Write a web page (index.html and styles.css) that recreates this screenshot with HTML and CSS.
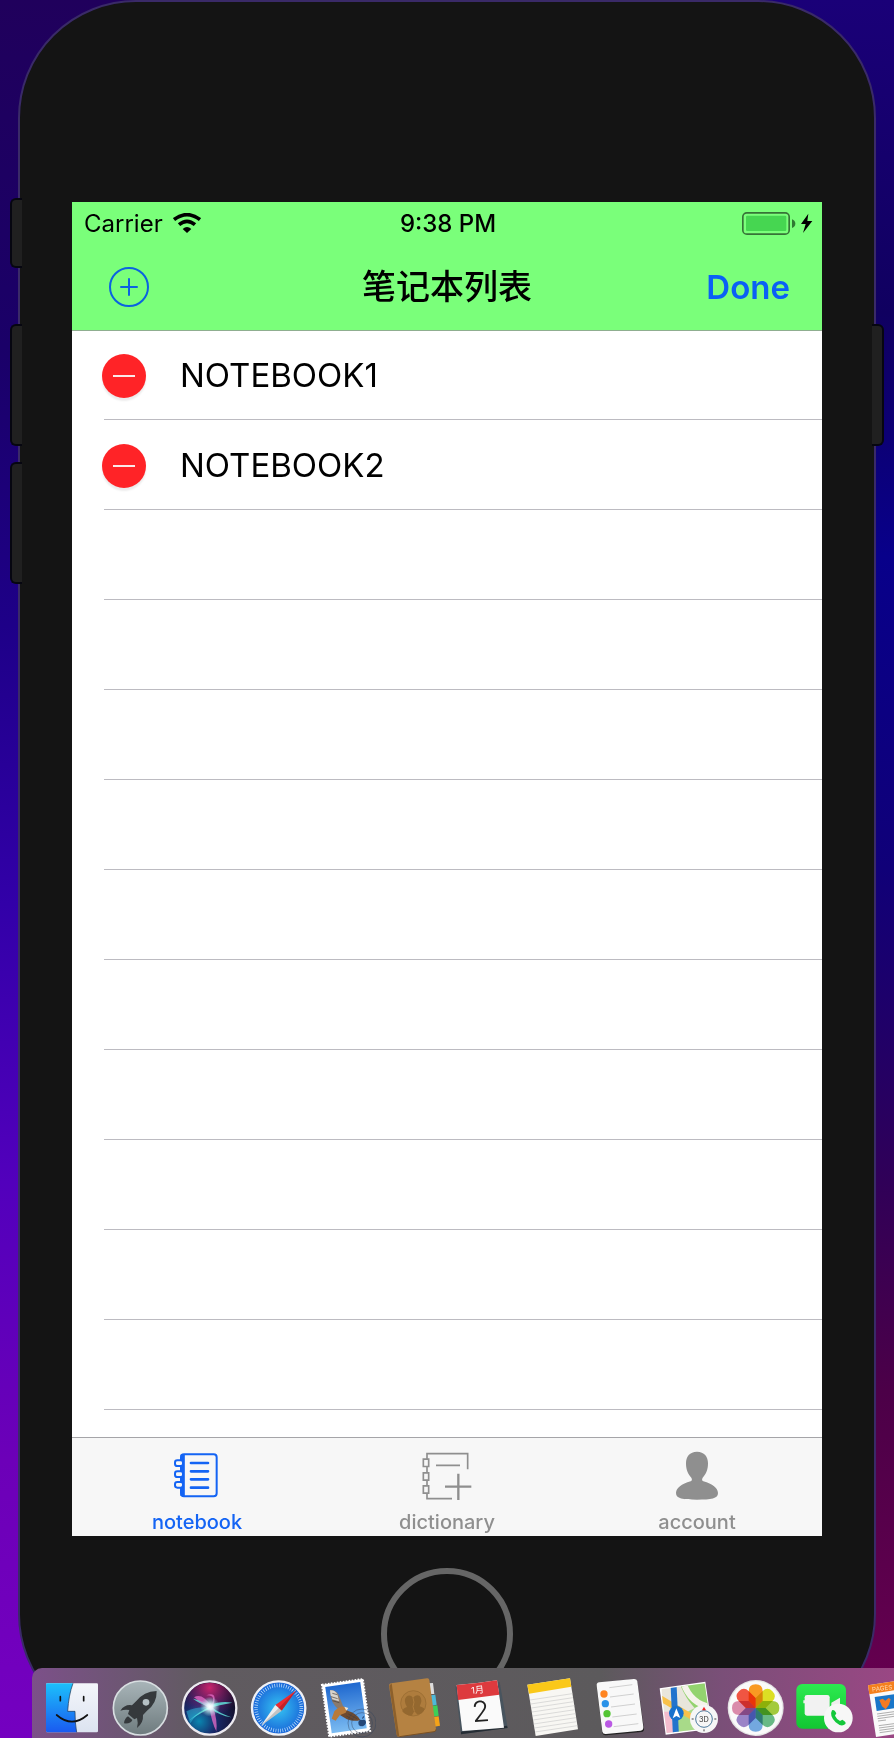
FILE: index.html
```html
<!DOCTYPE html>
<html lang="zh-CN">
<head>
<meta charset="utf-8">
<title>笔记本列表</title>
<meta name="viewport" content="width=device-width, initial-scale=1">
<link rel="stylesheet" href="styles.css">
</head>
<body>
<div class="desktop">
  <div class="phone">
    <span class="key key-mute"></span>
    <span class="key key-up"></span>
    <span class="key key-down"></span>
    <span class="key key-power"></span>

    <main class="screen">
      <header class="header">
        <div class="status">
          <div class="status-left">
            <span>Carrier</span>
            <svg class="wifi" viewBox="0 0 84 60" aria-label="Wi-Fi"><g fill="none" stroke="#000" stroke-width="11"><path d="M3 20Q42-10 81 20"/><path d="M18 35Q42 15 66 35"/></g><path d="M42 60L29 48Q42 36 55 48Z"/></svg>
          </div>
          <time class="clock">9:38 PM</time>
          <div class="status-right">
            <svg class="battery" viewBox="0 0 210 69" aria-label="Battery charging"><rect x="2.500" y="2.500" width="139" height="64" rx="12" fill="none" stroke="#000" stroke-opacity=".55" stroke-width="5"/><rect x="12" y="11" width="121" height="46" rx="4" fill="#46d651"/><path d="M150 22Q160 26 160 35T150 48Z" fill="#2f7a32"/><path d="M199 5L177 36H191L183 63L211 27H196Z"/></svg>
          </div>
        </div>
        <nav class="navbar">
          <button class="add" type="button" aria-label="Add notebook"><svg viewBox="0 0 40 40" fill="none" stroke="#0b63e0" stroke-width="2"><circle cx="20" cy="20" r="19"/><path d="M12 20H28M20 12V28" stroke-linecap="round"/></svg></button>
          <h1 class="title">笔记本列表</h1>
          <button class="done" type="button">Done</button>
        </nav>
      </header>

      <ul class="list">
        <li class="row"><button class="remove" type="button" aria-label="Delete NOTEBOOK1"></button><span>NOTEBOOK1</span></li>
        <li class="row"><button class="remove" type="button" aria-label="Delete NOTEBOOK2"></button><span>NOTEBOOK2</span></li>
        <li class="row"></li><li class="row"></li><li class="row"></li><li class="row"></li><li class="row"></li>
        <li class="row"></li><li class="row"></li><li class="row"></li><li class="row"></li><li class="row"></li>
      </ul>

      <nav class="tabs">
        <a class="tab tab-active" href="#notebook">
          <svg viewBox="-5 0 150 150" fill="none" stroke="currentColor"><rect x="22" y="13" width="107" height="126" rx="9" stroke-width="6"/><path d="M27 14V138" stroke-width="13"/><g stroke-width="6" fill="#f7f7f7"><rect x="4" y="31" width="24" height="17" rx="7"/><rect x="4" y="64" width="24" height="17" rx="7"/><rect x="4" y="96" width="24" height="17" rx="7"/></g><path d="M52 39H103M52 64H103M52 88H103M52 113H103" stroke-width="8" stroke-linecap="round"/></svg>
          <span>notebook</span>
        </a>
        <a class="tab" href="#dictionary">
          <svg viewBox="0 0 150 150" fill="none" stroke="currentColor" stroke-width="5"><path d="M137 58V11H15V27M15 50V67M15 91V108M15 130V146H90M42 46H114"/><path d="M4 27.500H20V49.500H4ZM4 68.500H20V90.500H4ZM4 107.500H20V129.500H4Z"/><path d="M69 110H148M109 71V150" stroke-width="7"/></svg>
          <span>dictionary</span>
        </a>
        <a class="tab" href="#account">
          <svg viewBox="0 0 150 150" fill="currentColor"><path d="M75 5C97 5 108 20 108 40C108 60 102 72 92 83C89 88 90 92 94 94C122 102 137 114 138 129C138 146 118 149 75 149S12 146 12 129C13 114 28 102 56 94C60 92 61 88 58 83C48 72 42 60 42 40C42 20 53 5 75 5Z"/></svg>
          <span>account</span>
        </a>
      </nav>
    </main>

    <button class="home" type="button" aria-label="Home"></button>
  </div>

  <aside class="dock" aria-label="Dock">
    <svg viewBox="126 84 180 210" role="img" aria-label="Finder">
      <defs><linearGradient id="fb" x2="0" y2="1"><stop stop-color="#1cc0fb"/><stop offset="1" stop-color="#1a5af0"/></linearGradient><linearGradient id="fw" x2="0" y2="1"><stop stop-color="#f4f6fb"/><stop offset="1" stop-color="#dce3f0"/></linearGradient></defs>
      <rect x="138" y="130" width="156" height="147" rx="4" fill="url(#fw)"/><path d="M142 130H219Q206 165 203 214H225Q225 250 230 277H142Q138 277 138 273V134Q138 130 142 130Z" fill="url(#fb)"/><path d="M219 130Q206 165 203 214H225Q225 250 230 277" fill="none" stroke="#16314f" stroke-width="2"/><g fill="none" stroke="#111" stroke-width="5" stroke-linecap="round"><path d="M181 170V182M251 170V182"/><path d="M170 225Q216 265 262 225"/></g>
    </svg>
    <svg viewBox="332 84 180 210" role="img" aria-label="Launchpad">
      <defs><linearGradient id="lp" x2="0" y2="1"><stop stop-color="#a9b5b9"/><stop offset="1" stop-color="#6e7b7e"/></linearGradient></defs>
      <circle cx="420" cy="204" r="81" fill="url(#lp)" stroke="#d8dee1" stroke-width="5"/><path d="M469 153Q430 155 408 183L395 196Q374 192 360 212Q374 207 387 210L383 222L402 238L410 234Q414 246 410 264Q430 248 428 225L440 212Q470 190 469 153ZM383 229L396 240Q392 252 371 250Q372 236 383 229Z" fill="#35393c"/><circle cx="437" cy="187" r="10" fill="#b4c0c4"/>
    </svg>
    <svg viewBox="538 84 180 210" role="img" aria-label="Siri">
      <defs><radialGradient id="sa" cx=".3" cy=".75" r=".8"><stop stop-color="#0a86b0"/><stop offset=".4" stop-color="#182a6a"/><stop offset="1" stop-color="#130a20"/></radialGradient><radialGradient id="sp" cx=".5" cy=".1" r=".6"><stop stop-color="#c8246c"/><stop offset="1" stop-color="#8a1d7a" stop-opacity="0"/></radialGradient><radialGradient id="sg"><stop stop-color="#fff"/><stop offset=".3" stop-color="#e8ffff" stop-opacity=".9"/><stop offset="1" stop-color="#8fe" stop-opacity="0"/></radialGradient></defs>
      <circle cx="630" cy="204" r="80" fill="url(#sa)" stroke="#eceaf0" stroke-width="7"/><circle cx="630" cy="204" r="76" fill="url(#sp)"/><path d="M568 242Q600 212 630 200Q600 192 580 176Q612 182 633 196Q660 182 698 188Q664 194 636 202Q660 220 695 232Q660 226 632 206Q605 216 568 242Z" fill="#5fe0d8" opacity=".85"/><path d="M583 172Q608 158 634 198Q652 164 620 166Q656 152 640 200Q654 240 650 274Q636 246 630 206Q606 190 583 172Z" fill="#e86cc8" opacity=".75"/><path d="M560 214Q590 200 622 202Q592 220 572 250Z" fill="#36c8e8" opacity=".45"/><circle cx="631" cy="200" r="30" fill="url(#sg)"/>
    </svg>
    <svg viewBox="743 84 180 210" role="img" aria-label="Safari">
      <defs><radialGradient id="sf"><stop stop-color="#35c4f2"/><stop offset="1" stop-color="#1863d8"/></radialGradient></defs>
      <circle cx="835" cy="204" r="80" fill="url(#sf)" stroke="#f0f1f5" stroke-width="7"/><circle cx="835" cy="204" r="68" fill="none" stroke="#cbe7ff" stroke-width="11" stroke-dasharray="2 5.100"/><path d="M888 151L825 195L844 212Z" fill="#ec2a30"/><path d="M844 212L825 195L782 257Z" fill="#eee"/><path d="M782 257L888 151L844 212Z" opacity=".18"/>
    </svg>
    <svg viewBox="49 84 180 210" role="img" aria-label="Mail">
      <defs><linearGradient id="ml" x2="0" y2="1"><stop stop-color="#1f68cf"/><stop offset="1" stop-color="#7cbcf2"/></linearGradient></defs>
      <g transform="rotate(-8 139 203)"><rect x="77" y="125" width="124" height="157" fill="#fff" stroke="#fff" stroke-width="6" stroke-dasharray="5 4"/><rect x="86" y="133" width="106" height="140" fill="url(#ml)"/></g>
      <path d="M130 200L144 212Q170 219 182 240Q165 246 142 238L122 226Z" fill="#6d4a30"/><path d="M91 151Q106 148 116 163L131 200L118 210Q92 190 91 151Z" fill="#8a7a6c"/><path d="M91 151Q105 148 113 163L118 184L98 178Q91 166 91 151Z" fill="#d8d4cc"/><path d="M96 236L104 214Q118 198 134 200Q144 208 138 218L120 226L108 242Z" fill="#b87a3a"/><path d="M134 200L146 204L140 212Z" fill="#f0e6d4"/><path d="M94 170L114 176M98 182L119 188M98 160L113 164M146 222L172 236M140 228L162 240" stroke="#4a3e36" stroke-width="2"/><g fill="none" stroke="#32435a" stroke-width="2" opacity=".65"><circle cx="187" cy="249" r="42"/><circle cx="187" cy="249" r="31"/></g><path d="M187 240Q199 236 199 249Q194 261 187 258Q176 261 176 247Q177 237 187 240ZM187 237Q187 229 194 227Q194 234 187 237Z" fill="#254878"/>
    </svg>
    <svg viewBox="254 84 180 210" role="img" aria-label="Contacts">
      <path d="M382 130L398 129L402 162H387Z" fill="#ddd"/><path d="M390 166L405 164L409 194L394 197Z" fill="#4db9d9"/><path d="M395 198L411 196L415 227L399 230Z" fill="#3ccf57"/><path d="M399 231L415 229L419 257L402 260Z" fill="#f5a318"/><path d="M272 130L380 115Q386 114 387 120L407 268Q408 274 401 275L297 290Q290 291 289 284L266 137Q266 131 272 130Z" fill="#b58242"/><path d="M267 137L274 130L297 290Q290 291 289 284Z" fill="#8d602b"/><path d="M297 290L401 275Q408 274 407 268" fill="none" stroke="#7a5124" stroke-width="3"/><circle cx="339" cy="190" r="38" fill="#ae7c3d" stroke="#94682f" stroke-width="2"/><path d="M306 214Q307 205 320 201Q308 180 318 170Q330 162 338 174Q346 162 358 168Q368 180 358 199Q371 203 373 208Q366 222 352 224L342 214L334 227Q314 226 306 214Z" fill="#94682f"/><path d="M338 174Q344 186 338 200L342 214" fill="none" stroke="#ae7c3d" stroke-width="3"/>
    </svg>
    <svg viewBox="460 84 180 210" role="img" aria-label="Calendar">
      <path d="M467 139L600 126L624 263L484 283Z" fill="#48545e"/><path d="M484 275L622 257L624 264L484 283Z" fill="#252d34"/><path d="M471 135Q531 131 592 121L613 263Q550 269 488 273Z" fill="#fafafa"/><path d="M471 135Q531 131 592 121L599 164L475 180Z" fill="#dd3a3e"/><g transform="rotate(-5 540 200)" text-anchor="middle"><text class="cal-month" x="538" y="159">1月</text><text class="cal-day" x="542" y="245">2</text></g>
    </svg>
    <svg viewBox="665 84 180 210" role="img" aria-label="Notes">
      <path d="M681 134L809 115L833 268L706 288Z" fill="#f8f7f3"/><path d="M681 134L809 115L813 140L686 161Z" fill="#fac819"/><path d="M689 180L816 161M691 192L818 173M693 204L820 185M695 216L822 197M697 228L824 209M698 240L825 221M700 252L827 233M702 264L829 245M704 276L831 257" stroke="#ccc" stroke-width="2"/>
    </svg>
    <svg viewBox="-11 84 180 210" role="img" aria-label="Reminders">
      <path d="M17 129L120 118Q129 117 131 125L151 266Q152 275 143 276L37 286Q28 287 26 279L9 139Q8 130 17 129Z" fill="#222"/><path d="M17 127L120 117Q129 116 131 124L149 261Q150 270 141 272L37 282Q28 283 26 275L9 137Q8 128 17 127Z" fill="#f8f8f8"/><path d="M47 143L116 134M49 171L120 162M52 201L124 192M56 231L129 222M60 260L134 251" stroke="#bbb" stroke-width="2"/><circle cx="31" cy="162" r="11" fill="#ff8420"/><circle cx="35" cy="191" r="11" fill="#2a92e8"/><circle cx="40" cy="221" r="11" fill="#54c534"/><circle cx="45" cy="252" r="11" fill="#ba59e4"/>
    </svg>
    <svg viewBox="194 84 180 210" role="img" aria-label="Maps">
      <defs><clipPath id="mc"><path d="M201 148L331 130L350 263L217 279Z"/></clipPath></defs>
      <path d="M196 145L333 125L354 266L214 284Z" fill="#fff"/><g clip-path="url(#mc)"><path d="M190 110H370V300H190Z" fill="#e9e6dc"/><path d="M260 120H350V240Q290 210 260 140Z" fill="#93d36f"/><path d="M250 230L300 205L370 270V300H250Z" fill="#a8da89"/><path d="M265 120Q285 195 360 203" fill="none" stroke="#f5f3eb" stroke-width="18"/><path d="M190 170L300 235" stroke="#f8c14a" stroke-width="17"/><path d="M200 215H230L240 285H205Z" fill="#f3bccd"/><path d="M237 120L245 290" stroke="#2274cd" stroke-width="18"/></g><circle cx="246" cy="220" r="22" fill="#1671cd"/><path d="M246 205L258 234L246 228L235 235Z" fill="#fff"/><circle cx="329" cy="237" r="42" fill="#f6f6f6"/><circle cx="329" cy="237" r="25" fill="none" stroke="#4b799d" stroke-width="3"/><path d="M329 200L335 211H323Z" fill="#e22"/><path d="M329 268V274M292 237H298M360 237H366" stroke="#444" stroke-width="3"/><text class="map-label" x="329" y="245" text-anchor="middle">3D</text>
    </svg>
    <svg viewBox="400 84 180 210" role="img" aria-label="Photos">
      <defs><path id="petal" d="M486 204L465 183V154Q465 133 486 133T507 154V183Z"/></defs>
      <circle cx="486" cy="204" r="84" fill="#e4e4e4"/><circle cx="486" cy="204" r="80" fill="#fafafa"/>
      <g class="petals"><use href="#petal" fill="#f99a22"/><use href="#petal" transform="rotate(45 486 204)" fill="#dcdf24"/><use href="#petal" transform="rotate(90 486 204)" fill="#a3ca3d"/><use href="#petal" transform="rotate(135 486 204)" fill="#68b985"/><use href="#petal" transform="rotate(180 486 204)" fill="#73a8df"/><use href="#petal" transform="rotate(225 486 204)" fill="#9a83c7"/><use href="#petal" transform="rotate(270 486 204)" fill="#da8bab"/><use href="#petal" transform="rotate(315 486 204)" fill="#f05542"/></g>
    </svg>
    <svg viewBox="605 84 180 210" role="img" aria-label="FaceTime">
      <defs><linearGradient id="ft" x2="0" y2="1"><stop stop-color="#2cea50"/><stop offset="1" stop-color="#12c632"/></linearGradient></defs>
      <rect x="606" y="132" width="149" height="134" rx="18" fill="url(#ft)"/><rect x="631" y="165" width="75" height="62" rx="7" fill="#f2f2f2"/><path d="M711 188L737 173V220L711 205ZM627 181H632V190H627Z" fill="#eee"/><circle cx="732" cy="234" r="43" fill="#f7f7f7"/><path d="M713 211Q720 207 726 220L722 227Q727 238 737 243L744 239Q757 246 753 252Q742 263 724 247Q704 227 713 211Z" fill="#14c83b"/>
    </svg>
    <svg viewBox="798 84 102 210" role="img" aria-label="Pages">
      <path d="M822 136L900 124V283L846 291Z" fill="#fafafa"/><path d="M822 136L900 124V151L826 163Z" fill="#f4801e"/><text class="pages-label" x="835" y="155" transform="rotate(-7 835 155)">PAGES</text><path d="M842 171L900 163V205L848 213Z" fill="#1976c9"/><path d="M856 180L866 176L874 182L884 174L890 178L885 194L875 208L864 199Z" fill="#f47a24"/><path d="M849 222L900 215M850 229L900 222M851 236L900 229M852 243L876 240M854 257L900 251M855 264L900 258M856 271L900 265M857 278L900 272" stroke="#888" stroke-width="2"/>
    </svg>
  </aside>
</div>
</body>
</html>
```

FILE: styles.css
```css
* {
  box-sizing: border-box;
}

body {
  margin: 0;
  font-family: Inter, "Noto Sans CJK SC", sans-serif;
  color: #000;
}

button {
  padding: 0;
  border: 0;
  background: none;
  font: inherit;
}

.desktop {
  position: relative;
  overflow: hidden;
  min-height: 100vh;
  padding: 0 18px;
  background:
    linear-gradient(#1a0078, #100060 18%, #08008a 32%, #100078 50%, #300058 68%, #4c0048 80%, #6a0050) right / 50% 100% no-repeat,
    linear-gradient(#20005c, #1a0068 20%, #1e0088 36%, #3200a8 52%, #5200bc 68%, #6c00b8 84%, #7400c0);
}

.phone {
  position: relative;
  padding: 200px 52px 30px;
  border: 2px solid #3a2a68;
  border-radius: 118px;
  background: #141414;
}

.key {
  position: absolute;
  left: -10px;
  width: 12px;
  border: 2px solid #060610;
  border-right: 0;
  border-radius: 6px 0 0 6px;
  background: #202020;
}

.key-mute {
  top: 196px;
  height: 70px;
}

.key-up {
  top: 322px;
  height: 122px;
}

.key-down {
  top: 460px;
  height: 122px;
}

.key-power {
  top: 322px;
  right: -10px;
  left: auto;
  height: 122px;
  border-right: 2px solid #060610;
  border-left: 0;
  border-radius: 0 6px 6px 0;
}

.screen {
  display: flex;
  flex-direction: column;
  min-height: 1334px;
  background: #fff;
}

.header {
  position: relative;
  background: #7aff7a;
  box-shadow: 0 1px 0 #8fae90;
}

.status {
  display: grid;
  grid-template-columns: 1fr auto 1fr;
  align-items: center;
  height: 42px;
  padding: 0 10px 0 12px;
  font-size: 24px;
}

.status-left {
  display: flex;
  align-items: center;
  gap: 10px;
}

.wifi {
  width: 28px;
  height: 20px;
}

.clock {
  font-weight: 500;
}

.status-right {
  display: flex;
  justify-content: flex-end;
}

.battery {
  width: 70px;
  height: 23px;
  overflow: visible;
}

.navbar {
  display: grid;
  grid-template-columns: 1fr auto 1fr;
  align-items: center;
  height: 86px;
  padding: 0 32px;
}

.add {
  justify-self: start;
  width: 45px;
  height: 40px;
  padding-left: 5px;
}

.add svg {
  display: block;
}

.title {
  margin: 0;
  font-size: 34px;
  font-weight: 500;
  line-height: 40px;
}

.done {
  justify-self: end;
  color: #0a60f5;
  font-size: 33px;
  font-weight: 600;
  line-height: 40px;
}

.list {
  flex: 1;
  margin: 0;
  padding: 0 0 0 32px;
  list-style: none;
}

.row {
  display: flex;
  align-items: center;
  gap: 34px;
  height: 90px;
  border-bottom: 1px solid #bcbbc1;
  font-size: 33px;
}

.remove {
  display: grid;
  place-items: center;
  width: 44px;
  height: 44px;
  margin-top: 2px;
  margin-left: -2px;
  border-radius: 50%;
  background: #ff2327;
  box-shadow: 0 3px 2px #ececec;
}

.remove::before {
  width: 22px;
  height: 2px;
  background: #fbe9e9;
  content: "";
}

.tabs {
  display: grid;
  grid-template-columns: repeat(3, 1fr);
  height: 99px;
  border-top: 1px solid #a5a5a8;
  background: #f7f7f7;
}

.tab {
  display: flex;
  flex-direction: column;
  align-items: center;
  gap: 10px;
  padding-top: 12px;
  color: #8f8f8f;
  font-size: 20px;
  font-weight: 500;
  line-height: 24px;
  text-decoration: none;
}

.tab svg {
  width: 50px;
  height: 50px;
}

.tab-active {
  color: #1464f4;
}

.home {
  display: block;
  width: 132px;
  height: 132px;
  margin: 32px auto 0;
  border: 6px solid #666;
  border-radius: 50%;
}

.dock {
  position: absolute;
  right: 0;
  bottom: 0;
  left: 32px;
  display: grid;
  grid-template-columns: repeat(12, 1fr) 34px;
  justify-items: center;
  padding-left: 6px;
  border-radius: 10px 0 0 0;
  background: linear-gradient(to right, #7c5089, #605b60 20%, #5c5a5c 66%, #7a4f78 80%, #9a4784);
}

.dock svg {
  display: block;
  width: 60px;
  height: 70px;
}

.dock svg:last-child {
  width: 34px;
}

.petals {
  isolation: isolate;
}

.petals use {
  mix-blend-mode: multiply;
}

.cal-month {
  fill: #fff;
  font-size: 27px;
}

.cal-day {
  fill: #222;
  font-size: 86px;
  font-weight: 300;
}

.map-label {
  fill: #333;
  font-size: 22px;
}

.pages-label {
  fill: #ffd9b0;
  font-size: 19px;
}
```
